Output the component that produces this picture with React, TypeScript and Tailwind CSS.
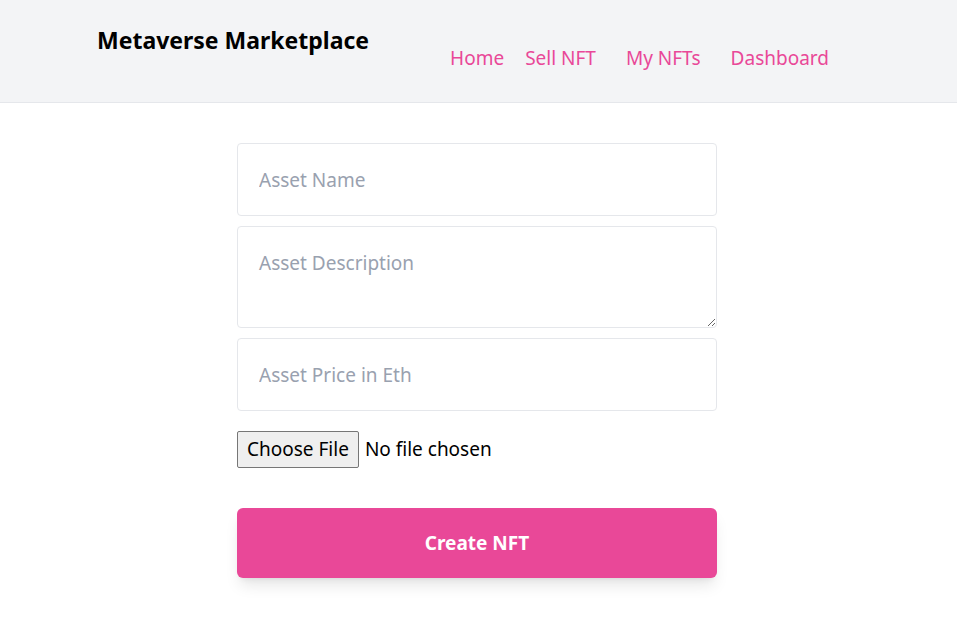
import { useState } from "react";

const font = { fontFamily: '"Noto Sans", "Open Sans", sans-serif' };

export default function App() {
	const [form, setForm] = useState({ name: "", description: "", price: "" });

	return (
		<div className="min-h-screen bg-white" style={font}>
			<nav className="flex h-[103px] border-b border-gray-200 bg-gray-100 pl-[97px]">
				<p className="mt-[23px] text-[23px] font-bold text-black">Metaverse Marketplace</p>
				<div className="ml-[81px] mt-[44px] flex text-[19px] text-[#e94898]">
					<a className="mr-[21px]">Home</a>
					<a className="mr-[30px]">Sell NFT</a>
					<a className="mr-[30px]">My NFTs</a>
					<a>Dashboard</a>
				</div>
			</nav>
			<div className="flex justify-center pr-[3px]">
				<div className="flex w-[480px] flex-col pb-12">
					<input
						placeholder="Asset Name"
						className="mt-[40px] h-[73px] rounded border border-gray-200 px-[21px] text-[19px] placeholder-gray-400 outline-none"
						value={form.name}
						onChange={(e) => setForm({ ...form, name: e.target.value })}
					/>
					<textarea
						placeholder="Asset Description"
						className="mt-[10px] h-[102px] rounded border border-gray-200 px-[21px] pt-[22px] text-[19px] placeholder-gray-400 outline-none"
						value={form.description}
						onChange={(e) => setForm({ ...form, description: e.target.value })}
					/>
					<input
						placeholder="Asset Price in Eth"
						className="mt-[10px] h-[73px] rounded border border-gray-200 px-[21px] text-[19px] placeholder-gray-400 outline-none"
						value={form.price}
						onChange={(e) => setForm({ ...form, price: e.target.value })}
					/>
					<div className="mt-[20px] flex items-center">
						<button className="h-[37px] rounded-[2px] border border-[#767676] bg-[#efefef] px-[9px] text-[19px] text-black">
							Choose File
						</button>
						<span className="ml-[6px] text-[19px] text-black">No file chosen</span>
					</div>
					<button className="mt-[40px] h-[70px] rounded-md bg-[#e94898] text-[19px] font-bold text-white shadow-lg">
						Create NFT
					</button>
				</div>
			</div>
		</div>
	);
}
